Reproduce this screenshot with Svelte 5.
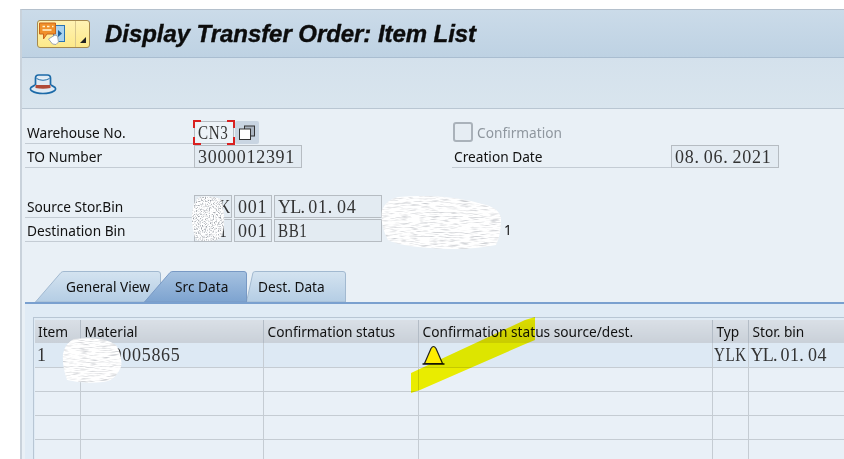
<script>
  const tabs = [
    { id: "general", title: "General View", w: 126, slant: 26 },
    { id: "src", title: "Src Data", w: 103, slant: 26, active: true },
    { id: "dest", title: "Dest. Data", w: 100, slant: 7 },
  ];
  const columns = [
    { title: "Item", w: 45 },
    { title: "Material", w: 183 },
    { title: "Confirmation status", w: 155 },
    { title: "Confirmation status source/dest.", w: 294 },
    { title: "Typ", w: 36 },
    { title: "Stor. bin", w: 110 },
  ];
  const emptyRows = [1, 2, 3, 4];
</script>

<div class="window">
  <header class="titlebar">
    <button class="menu-btn" aria-label="Menu">
      <span class="menu-icon">
        <svg width="30" height="24" viewBox="0 0 30 24">
          <rect x="15.500" y="3.500" width="11" height="16" fill="#a9d2ef" stroke="#2a74b4" />
          <path d="M20 8l4 3.500-4 3.500z" fill="#1f5f9a" />
          <path d="M1.500 1h16v11H9l-3.500 5v-5h-4z" fill="#f0902a" stroke="#c9641a" />
          <path d="M4.500 4.500h2.500M9 4.500h2.500M14 4.500h1.500M4.500 8h9" stroke="#fff3d0" stroke-width="1.300" />
          <path d="M17 13l-6.500 4 4 5 3.500 .5 2.500-2.500-1-6z" fill="#fff" stroke="#a0a6ac" />
        </svg>
      </span>
      <span class="menu-arrow"></span>
    </button>
    <h1>Display Transfer Order: Item List</h1>
  </header>

  <div class="toolbar">
    <svg width="28" height="24" viewBox="0 0 28 24" aria-label="Print">
      <path d="M6.500 15V7q0-3 3-3h9q3 0 3 3v8z" fill="#dfeaf4" stroke="#1c6aa8" stroke-width="1.700" />
      <path d="M7.500 7.500q6.500 3.500 13 0" fill="#f2f7fb" stroke="#1c6aa8" />
      <path d="M6 14l-4 2.500q-1.500 2 1 3.500q4 2.500 11 2.500t11-2.500q2.500-1.500 1-3.500l-4-2.500" fill="#dfeaf4" stroke="#1c6aa8" stroke-width="1.700" />
      <path d="M6.500 14h15v3q-7.500 1.500-15 0z" fill="#b04a38" />
    </svg>
  </div>

  <main class="content">
    <section class="form">
      <div class="row">
        <label class="lbl">Warehouse No.</label>
        <span class="field focus wh"><span class="narrow">CN3</span><i class="c tl"></i><i class="c tr"></i><i class="c bl"></i><i class="c br"></i></span>
        <span class="copy-btn">
          <svg width="18" height="16" viewBox="0 0 18 16">
            <rect x="6.500" y="1" width="10" height="10" fill="#aab4c0" stroke="#333" />
            <rect x="1.500" y="4" width="11" height="10.500" fill="#fff" stroke="#333" />
          </svg>
        </span>
        <span class="check-wrap">
          <span class="check"></span>
          <span class="check-lbl">Confirmation</span>
        </span>
      </div>
      <div class="row">
        <label class="lbl">TO Number</label>
        <span class="field to">3000012391</span>
        <label class="lbl date-lbl">Creation Date</label>
        <span class="field to">08. 06. 2021</span>
      </div>

      <div class="row bins">
        <label class="lbl">Source Stor.Bin</label>
        <span class="field b1"><span class="narrow">YLK</span></span>
        <span class="field b2">001</span>
        <span class="field b3"><span class="tight">YL.</span> 01. 04</span>
      </div>
      <div class="row">
        <label class="lbl">Destination Bin</label>
        <span class="field b1"><span class="narrow">BB1</span></span>
        <span class="field b2">001</span>
        <span class="field b3"><span class="narrow">BB1</span></span>
        <span class="bin-text">1</span>
      </div>
    </section>

    <nav class="tabs">
      {#each tabs as tab (tab.id)}
        <div class="tab" class:active={tab.active} style="width: {tab.w}px; padding-left: {tab.slant}px">
          <svg class="tab-bg" width={tab.w} height="31" viewBox="0 0 {tab.w} 31">
            <defs>
              <linearGradient id="grad-{tab.id}" x1="0" y1="0" x2="0" y2="1">
                <stop offset="0" stop-color={tab.active ? "#a6c2e0" : "#d4e3f0"} />
                <stop offset="1" stop-color={tab.active ? "#7da3d0" : "#b4cde4"} />
              </linearGradient>
            </defs>
            <path
              d="M0.500 31 L{tab.slant} 1.500 Q{tab.slant + 1} 0.500 {tab.slant + 3} 0.500 H{tab.w - 3} Q{tab.w - 0.5} 0.500 {tab.w - 0.5} 3 V31 Z"
              fill="url(#grad-{tab.id})"
              stroke={tab.active ? "#7899c4" : "#a2b9d0"}
            />
          </svg>
          <span>{tab.title}</span>
        </div>
      {/each}
    </nav>

    <section class="panel">
      <div class="grid">
        <table>
          <colgroup>
            {#each columns as col}
              <col style="width: {col.w}px" />
            {/each}
          </colgroup>
          <thead>
            <tr>
              {#each columns as col}
                <th>{col.title}</th>
              {/each}
            </tr>
          </thead>
          <tbody>
            <tr class="first">
              <td class="mono">1</td>
              <td class="mono">0000005865</td>
              <td></td>
              <td>
                <svg class="warn" width="24" height="20" viewBox="0 0 24 20" aria-label="Warning">
                  <path d="M2.500 18.500 L9 3.500 Q11.500 -0.500 14 3.500 L20.500 18.500z" fill="#ffee00" stroke="#222" stroke-width="1.200" />
                  <path d="M0.500 19h22" stroke="#111" stroke-width="1.500" />
                </svg>
              </td>
              <td class="mono typ"><span class="narrow">YLK</span></td>
              <td class="mono bin"><span class="tight">YL.</span> 01. 04</td>
            </tr>
            {#each emptyRows as r (r)}
              <tr>
                {#each columns as col}
                  <td></td>
                {/each}
              </tr>
            {/each}
          </tbody>
        </table>
      </div>
    </section>
  </main>
</div>

<!-- redaction scribbles, they sit on top of the screenshot -->
<svg class="overlay" width="844" height="459" viewBox="0 0 844 459">
  <defs>
    <filter id="speck" x="0" y="0" width="1" height="1" color-interpolation-filters="sRGB">
      <feTurbulence type="fractalNoise" baseFrequency="0.75" numOctaves="2" seed="4" />
      <feColorMatrix values="0 0 0 0 0.6  0 0 0 0 0.62  0 0 0 0 0.65  3 0 0 0 -1.400" />
      <feComposite in2="SourceGraphic" operator="in" result="noise" />
      <feMerge><feMergeNode in="SourceGraphic" /><feMergeNode in="noise" /></feMerge>
    </filter>
    <filter id="lines" x="0" y="0" width="1" height="1" color-interpolation-filters="sRGB">
      <feTurbulence type="fractalNoise" baseFrequency="0.1 0.8" numOctaves="2" seed="9" />
      <feColorMatrix values="0 0 0 0 0.75  0 0 0 0 0.76  0 0 0 0 0.78  2.200 0 0 0 -1.050" />
      <feComposite in2="SourceGraphic" operator="in" result="noise" />
      <feMerge><feMergeNode in="SourceGraphic" /><feMergeNode in="noise" /></feMerge>
    </filter>
  </defs>
  <path d="M199 197q12-2 22 2q4 12 3 26q-1 12-6 15q-12 2-22 0q-5-14-4-26q1-12 7-17z" fill="#fff" filter="url(#speck)" />
  <path d="M398 197q50-4 88 8q14 4 15 14q0 16-5 26q-30 6-66 3q-30-2-42-8q-8-14-6-30q4-10 16-13z" fill="#fff" filter="url(#lines)" />
  <path d="M74 339q30-3 42 6q7 12 5 22q-6 14-18 15q-20 2-36-2q-5-14-4-26q2-11 11-15z" fill="#fff" filter="url(#lines)" />
</svg>
<svg class="overlay marker" width="844" height="459" viewBox="0 0 844 459">
  <path d="M411 373 L525 320 L535 317 L535 340 L523 345 L420 390 L411 393z" fill="#fffb00" />
</svg>

<style>
  :global(body) {
    margin: 0;
    background: #fff;
    overflow: hidden;
  }
  .window {
    margin: 9px 0 0 20px;
    height: 450px;
    width: 824px;
    overflow: hidden;
    box-sizing: border-box;
    border-top: 1px solid #b4c0cc;
    border-left: 2px solid #c9d2db;
    background: #e9f0f6;
    font-family: "Noto Sans", "Liberation Sans", sans-serif;
    color: #111;
  }
  .titlebar {
    height: 48px;
    box-sizing: border-box;
    display: flex;
    align-items: center;
    padding-left: 15px;
    background: linear-gradient(#cbdbe9, #bed2e3);
    border-bottom: 1px solid #a9bdd0;
  }
  .menu-btn {
    width: 53px;
    height: 28px;
    padding: 0;
    display: flex;
    border: 1px solid #a5894e;
    border-radius: 3px;
    background: linear-gradient(#fff3b4, #fde98a);
  }
  .menu-icon {
    width: 38px;
    height: 100%;
    display: flex;
    align-items: center;
    box-sizing: border-box;
    border-right: 1px solid #d8c78e;
  }
  .menu-arrow {
    flex: 1;
    position: relative;
  }
  .menu-arrow::after {
    content: "";
    position: absolute;
    right: 3px;
    bottom: 4px;
    border-style: solid;
    border-width: 0 0 6px 6px;
    border-color: transparent transparent #222 transparent;
  }
  h1 {
    margin: 0 0 0 15px;
    font-family: "Liberation Sans", sans-serif;
    font-size: 24px;
    font-weight: 700;
    font-style: italic;
    letter-spacing: -0.06px;
    -webkit-text-stroke: 0.4px #0c0c0c;
    color: #0c0c0c;
    white-space: nowrap;
  }
  .toolbar {
    height: 51px;
    box-sizing: border-box;
    display: flex;
    align-items: center;
    padding-left: 7px;
    background: linear-gradient(#d4e1ec, #d9e5ee);
    border-bottom: 1px solid #b9c6d2;
  }
  .content {
    padding: 11px 0 0 3px;
  }
  .form {
    display: flex;
    flex-direction: column;
  }
  .row {
    display: flex;
    align-items: flex-end;
    height: 24px;
  }
  .bins {
    margin-top: 26px;
  }
  .lbl {
    width: 169px;
    box-sizing: border-box;
    height: 24px;
    line-height: 25px;
    padding-left: 2px;
    font-size: 13.7px;
    white-space: nowrap;
    border-bottom: 1px solid #c4ccd4;
  }
  .field {
    position: relative;
    box-sizing: border-box;
    height: 23px;
    line-height: 22px;
    padding-left: 3px;
    font-family: "Liberation Serif", serif;
    font-size: 18px;
    letter-spacing: 0.7px;
    word-spacing: -1px;
    color: #333;
    background: #e3ebf2;
    border: 1px solid #b6bcc2;
    white-space: nowrap;
  }
  .narrow {
    display: inline-block;
    transform: scaleX(0.84);
    transform-origin: left center;
  }
  .tight {
    letter-spacing: -0.8px;
  }
  .wh {
    width: 40px;
    background: #edf3f8;
  }
  .to {
    width: 108px;
  }
  .c {
    position: absolute;
    width: 6px;
    height: 6px;
    border: 0 solid #d92020;
  }
  .tl { left: -2px; top: -2px; border-width: 2px 0 0 2px; }
  .tr { right: -2px; top: -2px; border-width: 2px 2px 0 0; }
  .bl { left: -2px; bottom: -2px; border-width: 0 0 2px 2px; }
  .br { right: -2px; bottom: -2px; border-width: 0 2px 2px 0; }
  .copy-btn {
    width: 24px;
    height: 23px;
    margin-left: 1px;
    display: flex;
    align-items: center;
    justify-content: center;
    background: #c9d5e2;
    border-radius: 2px;
  }
  .check-wrap {
    display: flex;
    align-items: center;
    gap: 4px;
    margin-left: 194px;
    height: 24px;
  }
  .check {
    width: 20px;
    height: 20px;
    box-sizing: border-box;
    background: #e6edf3;
    border: 2px solid #aab2ba;
    border-radius: 3px;
  }
  .check-lbl {
    font-size: 13.7px;
    color: #8f979f;
  }
  .date-lbl {
    width: 219px;
    margin-left: 150px;
  }
  .b1 {
    width: 38px;
  }
  .b2 {
    width: 38px;
    margin-left: 2px;
  }
  .b3 {
    width: 108px;
    margin-left: 2px;
  }
  .bin-text {
    margin-left: 122px;
    font-size: 13.7px;
    line-height: 24px;
  }
  .tabs {
    display: flex;
    height: 31px;
    margin-left: 10px;
    margin-top: 29px;
  }
  .tab {
    position: relative;
    box-sizing: border-box;
    height: 31px;
    line-height: 31px;
    font-size: 13.7px;
    margin-right: -1px;
  }
  .tab.active {
    z-index: 1;
    margin-left: -16px;
  }
  .tab span {
    position: relative;
    margin-left: 5px;
    white-space: nowrap;
  }
  .tab-bg {
    position: absolute;
    left: 0;
    top: 0;
  }
  .panel {
    padding: 13px 0 0 8px;
    height: 160px;
    background: #e0ebf5;
    border-top: 2px solid #7aa0cf;
  }
  .grid {
    width: 840px;
    height: 150px;
    padding: 2px 0 0 1px;
    background: #e0ebf5;
    border-top: 1px solid #b8c6d4;
    border-left: 1px solid #b8c6d4;
  }
  table {
    border-collapse: collapse;
    table-layout: fixed;
    width: 823px;
    background: #e9f0f7;
  }
  th {
    height: 23px;
    padding: 0 0 0 4px;
    box-sizing: border-box;
    text-align: left;
    font-size: 13.7px;
    font-weight: 400;
    white-space: nowrap;
    background: linear-gradient(#d9dfe6, #c9d0d8);
    border-right: 1px solid #b3bcc6;
  }
  th:first-child {
    padding-left: 3px;
  }
  td {
    height: 24px;
    padding: 0 0 0 3px;
    box-sizing: border-box;
    border-right: 1px solid #c5ccd3;
    border-bottom: 1px solid #c5ccd3;
    white-space: nowrap;
    overflow: hidden;
  }
  .first td {
    background: #dde9f4;
  }
  .first td:first-child {
    padding-left: 2px;
  }
  .mono {
    padding-top: 2px;
    font-family: "Liberation Serif", serif;
    font-size: 18px;
    letter-spacing: 0.7px;
    color: #333;
  }
  td.typ {
    padding-left: 1px;
  }
  td.bin {
    padding-left: 2px;
    word-spacing: -1px;
    letter-spacing: 0.4px;
  }
  .warn {
    display: block;
    margin-top: 1px;
  }
  .overlay {
    position: absolute;
    left: 0;
    top: 0;
    pointer-events: none;
  }
  .marker {
    mix-blend-mode: multiply;
  }
</style>
